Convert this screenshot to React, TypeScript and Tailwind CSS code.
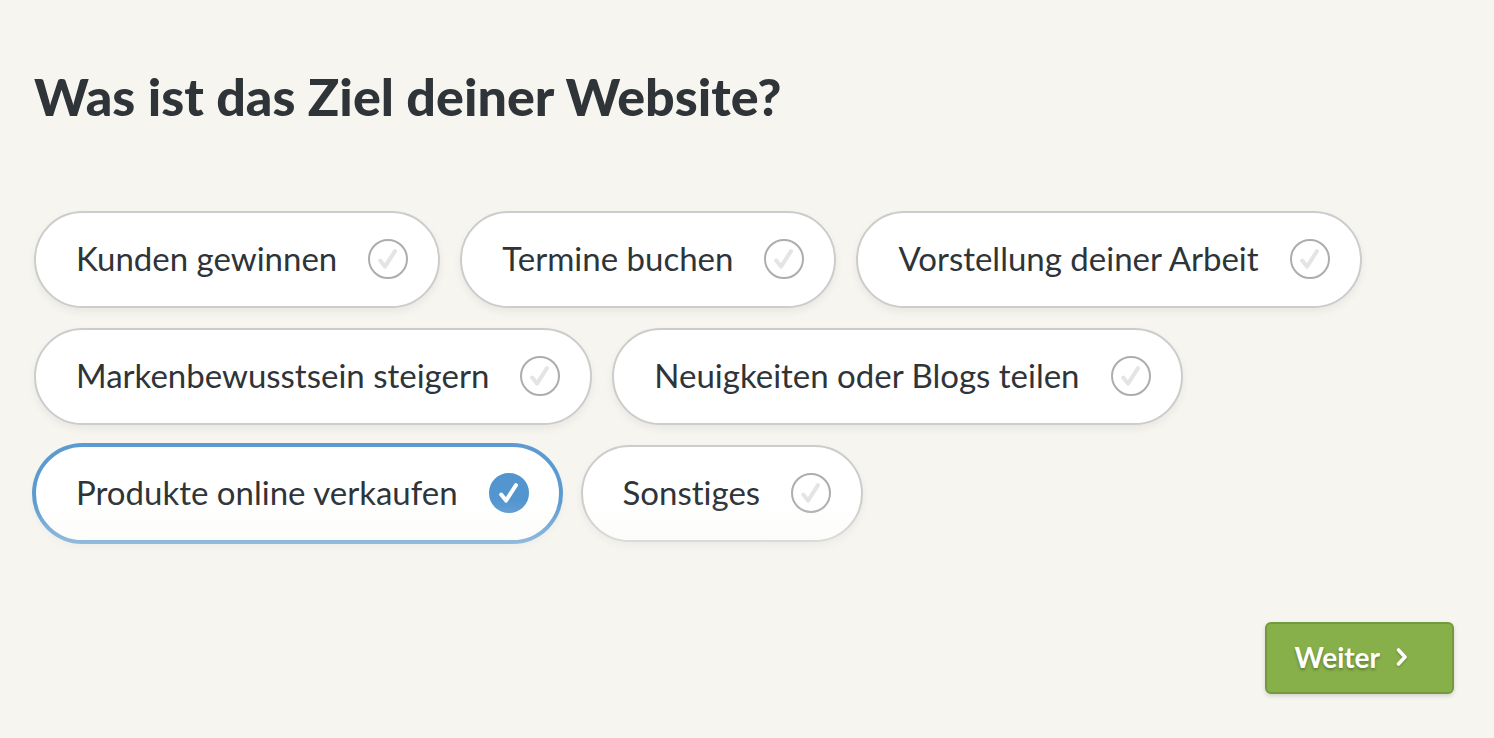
import { useState } from 'react';

type Goal = { id: string; label: string };

const goals: Goal[] = [
  { id: 'customers', label: 'Kunden gewinnen' },
  { id: 'appointments', label: 'Termine buchen' },
  { id: 'portfolio', label: 'Vorstellung deiner Arbeit' },
  { id: 'brand', label: 'Markenbewusstsein steigern' },
  { id: 'news', label: 'Neuigkeiten oder Blogs teilen' },
  { id: 'shop', label: 'Produkte online verkaufen' },
  { id: 'other', label: 'Sonstiges' },
];

function CheckMark() {
  return (
    <svg
      viewBox="0 0 40 40"
      fill="none"
      className="size-10 shrink-0 text-[#e4e4e4] group-has-checked:text-white"
      aria-hidden="true"
    >
      <circle
        cx="20"
        cy="20"
        r="19"
        strokeWidth="2"
        className="stroke-[#adadad] group-has-checked:fill-[#5295cf] group-has-checked:stroke-[#5295cf]"
      />
      <path
        d="M12.2 21.5 L17 27.6 L27 12.2"
        stroke="currentColor"
        strokeWidth="4"
        strokeLinecap="round"
        strokeLinejoin="round"
      />
    </svg>
  );
}

function GoalPill({ goal, checked, onToggle }: { goal: Goal; checked: boolean; onToggle: () => void }) {
  return (
    <label className="group flex h-[97px] cursor-pointer items-center gap-[31px] rounded-full border-2 border-[#cccccc] bg-white pr-[30px] pb-0.5 pl-10 text-[33px] leading-10 text-[#2e3438] shadow-[0_4px_8px_rgba(0,0,0,0.06)] has-checked:border-[#5b9bd1] has-checked:ring-2 has-checked:ring-[#5b9bd1]">
      <input type="checkbox" className="sr-only" checked={checked} onChange={onToggle} />
      <span className="pb-0.5">{goal.label}</span>
      <CheckMark />
    </label>
  );
}

export default function App() {
  const [selected, setSelected] = useState<string[]>(['shop']);
  const toggle = (id: string) =>
    setSelected((s) => (s.includes(id) ? s.filter((x) => x !== id) : [...s, id]));

  return (
    <main className="min-h-screen bg-[#f6f5f0] pt-[66px] font-['Lato',sans-serif] [font-variant-ligatures:none]">
      <h1 className="px-[34px] text-[52px] leading-[60px] font-black text-[#2e3438]">
        Was ist das Ziel deiner Website?
      </h1>
      <div className="flex flex-wrap gap-5 px-[34px] pt-[85px] pb-[70px]">
        {goals.map((g) => (
          <GoalPill key={g.id} goal={g} checked={selected.includes(g.id)} onToggle={() => toggle(g.id)} />
        ))}
      </div>
      <footer className="relative flex justify-end px-10 pt-[10px] pb-10 before:pointer-events-none before:absolute before:inset-x-0 before:bottom-full before:h-28 before:bg-linear-to-b before:from-[#f6f5f0]/0 before:to-[#f6f5f0]/90">
        <button
          type="button"
          className="flex h-[72px] cursor-pointer items-center gap-4 rounded-md border-2 border-[#739a3c] bg-[#87b04a] pr-11 pb-0.5 pl-7 text-[28px] font-bold text-white shadow-[0_2px_4px_rgba(0,0,0,0.15)] text-shadow-[0_2px_3px_rgba(0,0,0,0.3)]"
        >
          <span>Weiter</span>
          <svg
            viewBox="0 0 12 20"
            fill="none"
            stroke="currentColor"
            strokeWidth="3.6"
            strokeLinecap="round"
            strokeLinejoin="round"
            className="h-5 w-3 drop-shadow-[0_1px_1px_rgba(0,0,0,0.25)]"
            aria-hidden="true"
          >
            <path d="M2.5 3 L9 10 L2.5 17" />
          </svg>
        </button>
      </footer>
    </main>
  );
}
